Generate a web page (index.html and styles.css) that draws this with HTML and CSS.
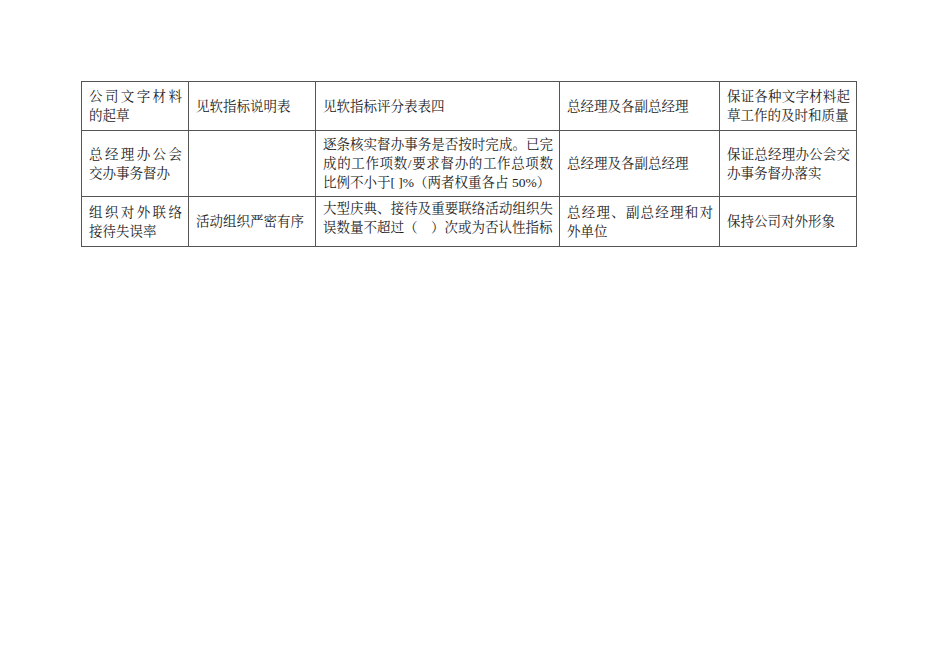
FILE: index.html
```html
<!DOCTYPE html>
<html lang="zh-CN">
<head>
<meta charset="utf-8">
<title>指标表</title>
<link rel="stylesheet" href="styles.css">
</head>
<body>
<div class="page">
<table class="grid">
<colgroup>
<col class="c1"><col class="c2"><col class="c3"><col class="c4"><col class="c5">
</colgroup>
<tbody>
<tr class="r1">
<td>公司文字材料的起草</td>
<td>见软指标说明表</td>
<td>见软指标评分表表四</td>
<td>总经理及各副总经理</td>
<td>保证各种文字材料起草工作的及时和质量</td>
</tr>
<tr class="r2">
<td>总经理办公会交办事务督办</td>
<td></td>
<td>逐条核实督办事务是否按时完成。已完成的工作项数/要求督办的工作总项数比例不小于[ ]%（两者权重各占 50%）</td>
<td>总经理及各副总经理</td>
<td>保证总经理办公会交办事务督办落实</td>
</tr>
<tr class="r3">
<td>组织对外联络接待失误率</td>
<td>活动组织严密有序</td>
<td class="top">大型庆典、接待及重要联络活动组织失误数量不超过（　）次或为否认性指标</td>
<td>总经理、副总经理和对外单位</td>
<td>保持公司对外形象</td>
</tr>
</tbody>
</table>
</div>
</body>
</html>
```
FILE: styles.css
```css
html, body {
  margin: 0;
  padding: 0;
  background: #ffffff;
}
.page {
  padding: 81px 0 0 81px;
}
.grid {
  border-collapse: collapse;
  table-layout: fixed;
  width: 775px;
  font-family: "Liberation Serif", "Noto Serif CJK SC", "Noto Sans CJK SC", serif;
  font-size: 13.5px;
  line-height: 19px;
  color: #222222;
}
.c1 { width: 107px; }
.c2 { width: 127px; }
.c3 { width: 244px; }
.c4 { width: 160px; }
.c5 { width: 137px; }
.grid td {
  border: 1px solid #555555;
  padding: 4px 6px 4px 7px;
  vertical-align: middle;
  text-align: justify;
  word-break: break-all;
}
.r1 td { height: 40px; }
.r2 td { height: 57px; }
.r3 td { height: 41px; }
.grid td.top {
  vertical-align: top;
  padding-top: 2px;
}
```
